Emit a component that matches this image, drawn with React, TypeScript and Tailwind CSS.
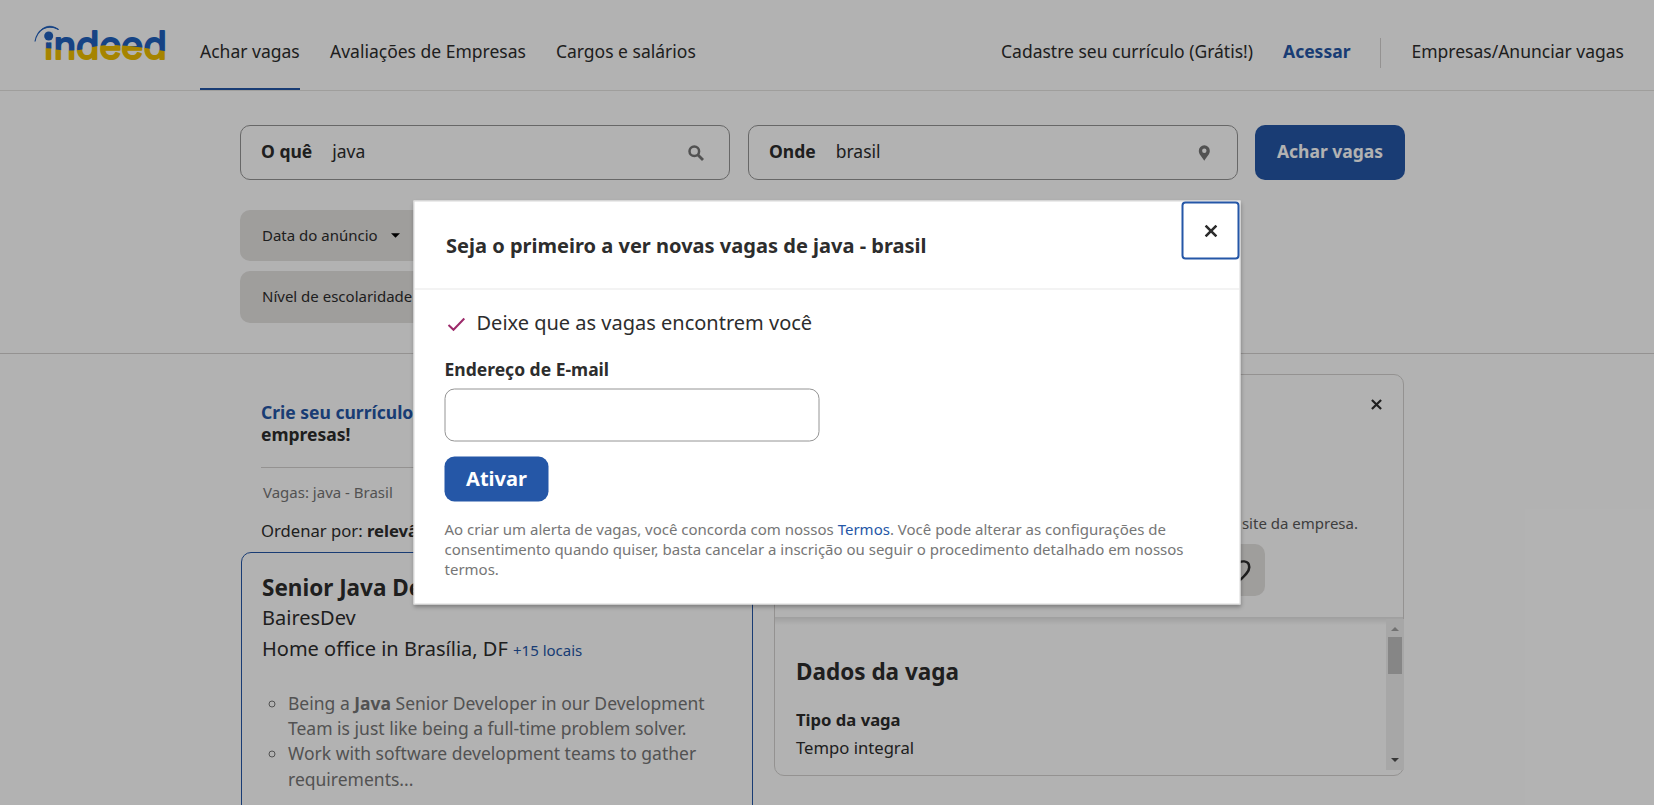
import React from "react";

function Logo() {
  return (
    <svg className="block h-[44px] w-[136px] overflow-visible" viewBox="0 0 136 44" aria-label="indeed">
      <defs>
        <pattern id="flag" patternUnits="userSpaceOnUse" width="180" height="60">
          <rect width="180" height="60" fill="#2060bd" />
          <path d="M0 25.500 L20 26.500 C28 29 42 29 50 27.500 C62 24 76 22 88 23.500 C104 24 118 27 140 30 V60 H0 Z" fill="#eebe00" />
        </pattern>
        <clipPath id="stems">
          <path d="M0 20.500 H20.500 V0 H180 V60 H0 Z" />
        </clipPath>
      </defs>
      <path d="M3 19.500 C5 8 15 1 26.500 7.500" fill="none" stroke="#2060bd" strokeWidth="1.200" />
      <path d="M9 8 C14 3 21 3 26.500 7.500 C21 4.500 15 4.500 9 8 Z" fill="#2060bd" stroke="#2060bd" strokeWidth="0.600" />
      <circle cx="16.700" cy="14" r="4.500" fill="#2060bd" />
      <text
        x="12 21.800 44 67.200 88.900 111.500"
        y="37"
        clipPath="url(#stems)"
        fill="url(#flag)"
        stroke="url(#flag)"
        strokeWidth="2"
        strokeLinejoin="round"
        className="font-['Inter',sans-serif] text-[38px] font-normal"
      >
        indeed
      </text>
    </svg>
  );
}

function CloseIcon({ className }: { className: string }) {
  return (
    <svg viewBox="0 0 12 12" className={className} fill="none" stroke="#2d2d2d" strokeWidth="2.400">
      <path d="M1 1 L11 11 M11 1 L1 11" />
    </svg>
  );
}

function Header() {
  return (
    <header className="flex h-[91px] border-b border-[#e4e2e0] pl-[32px] pr-[30px]">
      <div className="w-[168px] pt-[22px]">
        <Logo />
      </div>
      <nav className="flex h-[90px] gap-[30px] leading-[103px]">
        <a className="h-[90px] w-[100px] whitespace-nowrap border-b-2 border-[#2557a7]">Achar vagas</a>
        <a>Avaliações de Empresas</a>
        <a>Cargos e salários</a>
      </nav>
      <div className="ml-auto flex leading-[103px]">
        <a>Cadastre seu currículo (Grátis!)</a>
        <a className="ml-[30px] font-bold text-[#2557a7]">Acessar</a>
        <span className="ml-[30px] mr-[30px] mt-[38px] h-[30px] w-px bg-[#d4d2d0]" />
        <a>Empresas/Anunciar vagas</a>
      </div>
    </header>
  );
}

function Field({ label, value, children }: { label: string; value: string; children: React.ReactNode }) {
  return (
    <div className="flex h-[55px] w-[490px] items-center rounded-[10px] border border-[#949494] pl-[20px] pr-[25px]">
      <span className="pb-[2px] font-bold">{label}</span>
      <span className="ml-[20px] pb-[2px]">{value}</span>
      <span className="ml-auto">{children}</span>
    </div>
  );
}

function SearchArea() {
  return (
    <section className="h-[263px] border-b border-[#d4d2d0] pl-[240px] pt-[34px]">
      <div className="flex">
        <Field label="O quê" value="java">
          <svg viewBox="0 0 16 16" className="h-[16px] w-[16px]" fill="none" stroke="#767676" strokeWidth="2.500">
            <circle cx="6.300" cy="6.300" r="4.800" />
            <path d="M9.500 9.500 L15 15" strokeWidth="2.800" />
          </svg>
        </Field>
        <div className="w-[18px]" />
        <Field label="Onde" value="brasil">
          <svg viewBox="0 0 16 16" className="h-[16px] w-[16px]" fill="#767676">
            <path fillRule="evenodd" d="M8.300 0.300 A5.500 5.500 0 0 0 2.800 6 C2.800 9.500 6.300 12 8.300 15.800 C10.300 12 13.800 9.500 13.800 6 A5.500 5.500 0 0 0 8.300 0.300 Z M8.300 3.500 A2.200 2.200 0 1 1 8.300 7.900 A2.200 2.200 0 1 1 8.300 3.500 Z" />
          </svg>
        </Field>
        <button className="ml-[17px] h-[55px] w-[150px] rounded-[10px] bg-[#2557a7] pb-[2px] font-bold text-white">Achar vagas</button>
      </div>
      <div className="mt-[30px] flex h-[51px] w-[190px] items-center rounded-[10px] bg-[#e4e2e0] pl-[22px] text-[15px]">
        Data do anúncio
        <svg viewBox="0 0 10 5" className="ml-[13px] h-[5px] w-[9px]">
          <path d="M0 0 H10 L5 5 Z" fill="#000" />
        </svg>
      </div>
      <div className="mt-[10px] flex h-[52px] w-[240px] items-center rounded-[10px] bg-[#e4e2e0] pb-[2px] pl-[22px] text-[15px]">Nível de escolaridade</div>
    </section>
  );
}

function Results() {
  return (
    <div className="w-[512px] pt-[47px]">
      <div className="ml-[20px] border-b border-[#d4d2d0] pb-[22px] font-bold leading-[22px]">
        <div className="text-[#2557a7]">Crie seu currículo</div>
        <div>empresas!</div>
      </div>
      <div className="ml-[22px] mt-[14px] text-[15px] leading-[20px] text-[#767676]">Vagas: java - Brasil</div>
      <div className="ml-[20px] mt-[16px] text-[16.650px] leading-[25px]">
        Ordenar por: <b>relevância</b>
      </div>
      <article className="mt-[9px] h-[300px] rounded-[10px] border border-[#2557a7] pl-[20px] pt-[19px]">
        <h2 className="text-[22.500px] font-bold leading-[32px]">Senior Java Developer</h2>
        <div className="text-[20px] leading-[28px]">BairesDev</div>
        <div className="mt-[3px] text-[20px] leading-[28px]">
          Home office in Brasília, DF <span className="text-[15px] text-[#2557a7]">+15 locais</span>
        </div>
        <ul className="mt-[27px] list-[circle] pl-[26px] leading-[25.200px] text-[#767676]">
          <li>
            Being a <b>Java</b> Senior Developer in our Development
            <br />
            Team is just like being a full-time problem solver.
          </li>
          <li>
            Work with software development teams to gather
            <br />
            requirements...
          </li>
        </ul>
      </article>
    </div>
  );
}

function Details() {
  return (
    <aside className="ml-[21px] mt-[20px] flex h-[402px] w-[630px] flex-col rounded-[10px] border border-[#d4d2d0]">
      <div className="relative h-[242px] pr-[21px] pt-[24px]">
        <CloseIcon className="ml-auto h-[11px] w-[11px]" />
        <div className="mr-[24px] mt-[101px] text-right text-[15px] leading-[24px] text-[#595959]">site da empresa.</div>
        <div className="ml-[434px] mt-[9px] flex h-[52px] w-[56px] items-center justify-center rounded-[10px] bg-[#e4e2e0] pt-[3px]">
          <svg viewBox="0 0 24 24" className="h-[26px] w-[28px]" fill="none" stroke="#2d2d2d" strokeWidth="2.200" preserveAspectRatio="none">
            <path d="M12 22 C7 17 1.500 12.500 1.500 7.500 C1.500 1 9.500 0.500 12 6 C14.500 0.500 22.500 1 22.500 7.500 C22.500 12.500 17 17 12 22 Z" />
          </svg>
        </div>
      </div>
      <div className="-mb-[8px] h-[8px] bg-linear-to-b from-[#e4e4e4] to-transparent" />
      <div className="flex">
        <div className="grow pl-[21px] pt-[38px]">
          <h2 className="text-[22.500px] font-bold leading-[34px]">Dados da vaga</h2>
          <div className="mt-[17px] text-[16.650px] font-bold leading-[28px]">Tipo da vaga</div>
          <div className="text-[16.650px] leading-[28px]">Tempo integral</div>
        </div>
        <div className="-mr-px mt-[2px] flex h-[151px] w-[18px] flex-col items-center bg-[#efefef]">
          <svg viewBox="0 0 8 4" className="mt-[8px] h-[4px] w-[8px]">
            <path d="M0 4 L4 0 L8 4 Z" fill="#a3a3a3" />
          </svg>
          <div className="mt-[6px] h-[37px] w-[14px] bg-[#c1c1c1]" />
          <svg viewBox="0 0 8 4" className="mb-[8px] mt-auto h-[4px] w-[8px]">
            <path d="M0 0 L4 4 L8 0 Z" fill="#505050" />
          </svg>
        </div>
      </div>
    </aside>
  );
}

function AlertDialog() {
  return (
    <div
      role="dialog"
      className="absolute left-[413px] top-[200px] h-[404px] w-[827px] translate-x-[0.5px] translate-y-[0.5px] border border-[#d8d8d8] bg-white shadow-[0_2px_4px_rgba(0,0,0,0.3)]"
    >
      <div className="flex h-[88px] border-b border-[#e8e8e8] pl-[31.500px]">
        <h1 className="pt-[30px] text-[20.050px] font-bold leading-[28px]">Seja o primeiro a ver novas vagas de java - brasil</h1>
        <button className="ml-auto flex h-[58px] w-[58px] items-center justify-center rounded-[4px] border-2 border-[#2557a7]">
          <CloseIcon className="h-[13px] w-[13px]" />
        </button>
      </div>
      <div className="pl-[30px] pt-[18px]">
        <div className="flex text-[20px] leading-[30px]">
          <svg viewBox="0 0 18 14" className="ml-[3px] mt-[10px] h-[14px] w-[18px]" fill="none" stroke="#9d2b6b" strokeWidth="2">
            <path d="M1 7.500 L6 12.300 L16.800 1" />
          </svg>
          <span className="ml-[11px]">Deixe que as vagas encontrem você</span>
        </div>
        <div className="mt-[19px] font-bold leading-[24px]">Endereço de E-mail</div>
        <div className="mt-[8px] h-[53px] w-[375px] rounded-[10px] border border-[#949494]" />
        <button className="mt-[15px] block h-[45px] w-[104px] rounded-[10px] bg-[#2557a7] pb-[2px] text-[20px] font-bold text-white">Ativar</button>
        <p className="mt-[17px] whitespace-nowrap text-[15px] leading-[20px] text-[#767676]">
          Ao criar um alerta de vagas, você concorda com nossos <a className="text-[#2557a7]">Termos</a>. Você pode alterar as configurações de
          <br />
          consentimento quando quiser, basta cancelar a inscrição ou seguir o procedimento detalhado em nossos
          <br />
          termos.
        </p>
      </div>
    </div>
  );
}

export default function App() {
  return (
    <div className="relative h-[805px] w-[1654px] overflow-hidden bg-white font-['Noto_Sans',sans-serif] text-[17.500px] text-[#2d2d2d]">
      <Header />
      <SearchArea />
      <main className="flex items-start pl-[241px]">
        <Results />
        <Details />
      </main>
      <div className="absolute inset-0 bg-black/30" />
      <AlertDialog />
    </div>
  );
}
